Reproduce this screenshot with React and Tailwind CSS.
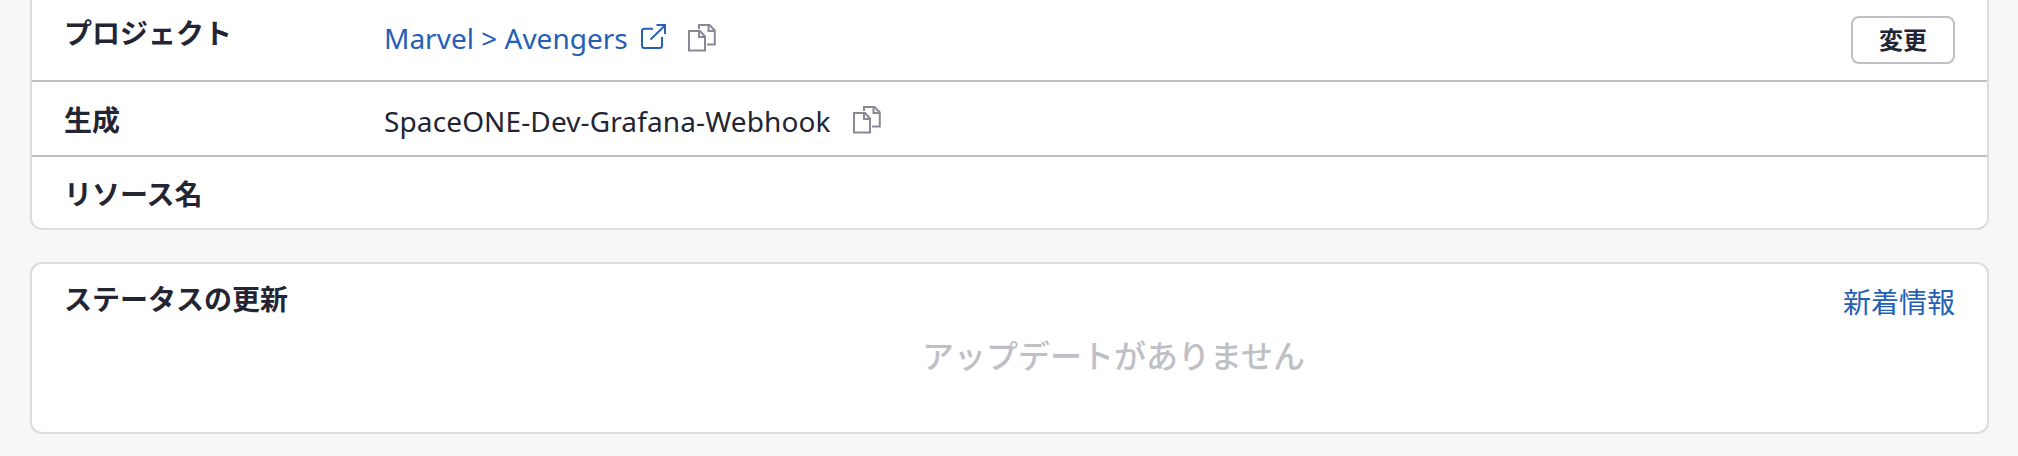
const CopyIcon = () => (
  <svg className="h-7 w-7 shrink-0" viewBox="0 0 28 28" fill="none" stroke="#898995" strokeWidth="2">
    <path d="M1 7h11L17 12.5V26.5H1z" />
    <path d="M11 7v6h6" />
    <path d="M11 5V1h10.5L26.8 6.5V20.5H19" />
    <path d="M20.5 1v6h6" />
  </svg>
);

const ExternalLinkIcon = () => (
  <svg className="h-7 w-7 shrink-0" viewBox="0 0 28 28" fill="none" stroke="#2560b5" strokeWidth="2">
    <path d="M12 4.7H3.5Q1 4.7 1 7.2V21.5Q1 24 3.5 24H18.5Q21 24 21 21.5V13" />
    <path d="M9.5 15.5L24 1.5" />
    <path d="M15.5 1H24V10" />
  </svg>
);

const Label = ({ children }) => <dt className="w-[320px] shrink-0 font-bold">{children}</dt>;

export default function App() {
  return (
    <div className="h-[456px] overflow-hidden bg-[#f7f7f7] pl-[30px] pr-[29px] font-['Noto_Sans','Noto_Sans_CJK_JP',sans-serif] text-[28px] leading-[40px] text-[#232533]">
      <dl className="h-[230px] rounded-b-xl border-2 border-t-0 border-[#dcdcdc] bg-white">
        <div className="flex h-[82px] border-b-2 border-[#bfbfc6] px-8 pt-[13px]">
          <Label>プロジェクト</Label>
          <dd className="flex flex-1 pt-[5px]">
            <a className="flex text-[#2560b5]">
              Marvel &gt; Avengers
              <span className="ml-[13px] mt-[6px]"><ExternalLinkIcon /></span>
            </a>
            <span className="ml-[19px] mt-[6px]"><CopyIcon /></span>
          </dd>
          <button className="mt-[3px] h-12 w-[104px] rounded-lg border-2 border-[#bfbfc6] text-[24px] leading-[44px] font-bold">変更</button>
        </div>
        <div className="flex h-[75px] border-b-2 border-[#bfbfc6] px-8 pt-[18px]">
          <Label>生成</Label>
          <dd className="flex pt-[1px]">
            <span className="tracking-[0.12px]">SpaceONE-Dev-Grafana-Webhook</span>
            <span className="ml-[22.5px] mt-[5px]"><CopyIcon /></span>
          </dd>
        </div>
        <div className="flex h-[71px] px-8 pt-[17px]">
          <Label>リソース名</Label>
        </div>
      </dl>
      <section className="mt-8 h-[172px] rounded-xl border-2 border-[#dcdcdc] bg-white px-8">
        <div className="flex justify-between pt-[15px]">
          <h2 className="font-bold">ステータスの更新</h2>
          <a className="pt-[3px] text-[#2560b5]">新着情報</a>
        </div>
        <p className="pl-[208px] pt-[14px] text-center text-[32px] leading-[40px] font-medium text-[#bfbfc6]">アップデートがありません</p>
      </section>
    </div>
  );
}
